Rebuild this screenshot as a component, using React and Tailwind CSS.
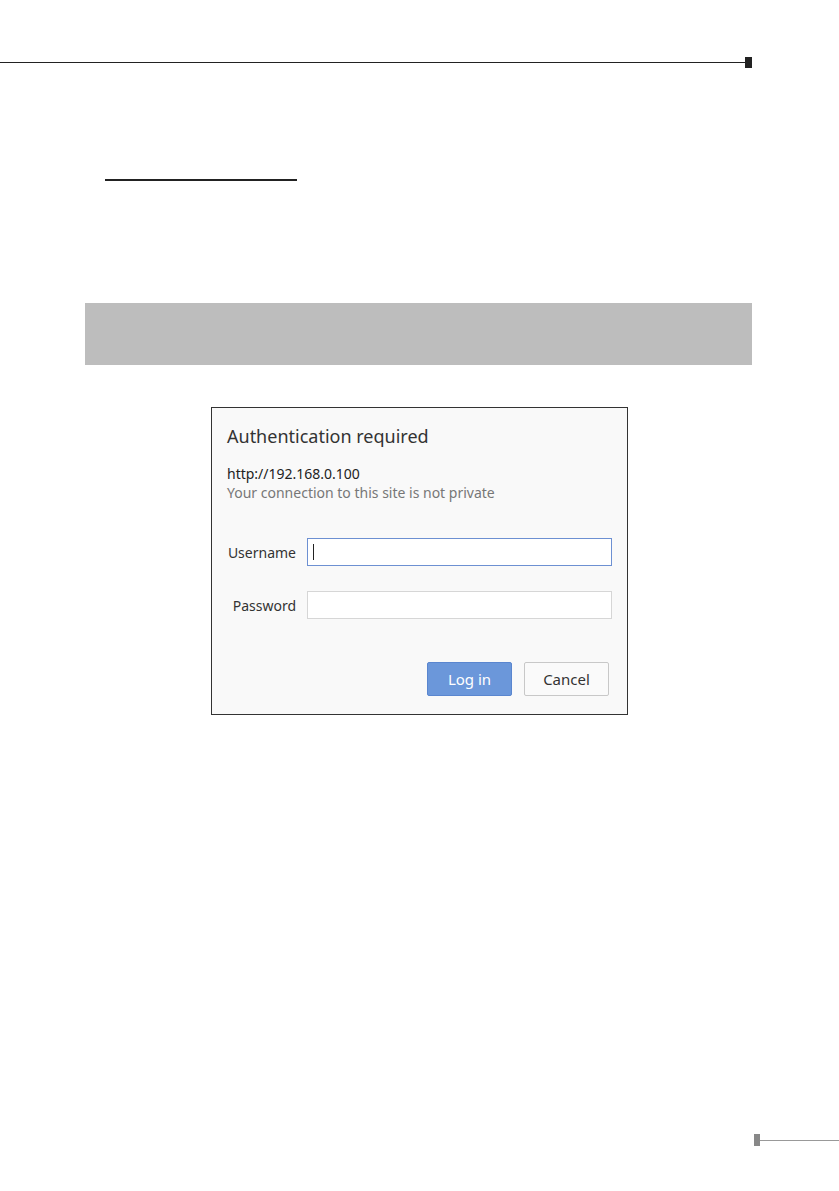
import React from 'react';

export default function App() {
  return (
    <div className="w-[839px] h-[1191px] bg-white flex flex-col font-['Noto_Sans',sans-serif]">
      {/* Page header rule */}
      <div className="mt-[57px] flex items-center h-[11px]">
        <div className="w-[745px] h-px bg-[#222]" />
        <div className="w-[7px] h-[11px] bg-[#222]" />
      </div>

      {/* Section underline */}
      <div className="mt-[111px] ml-[105px] w-[192px] h-[2px] bg-[#222]" />

      {/* Grey note bar */}
      <div className="mt-[122px] ml-[85px] w-[667px] h-[62px] bg-[#bdbdbd]" />

      {/* Auth dialog screenshot */}
      <div className="mt-[42px] ml-[211px] w-[417px] h-[308px] border border-[#333] bg-[#f9f9f9] flex flex-col pl-[15px] pr-[15px]">
        <div className="mt-[16px] text-[18px] leading-[24px] text-[#333]">Authentication required</div>
        <div className="mt-[17px] text-[14px] leading-[18px] text-[#222]">http://192.168.0.100</div>
        <div className="mt-px text-[14px] leading-[18px] text-[#777]">Your connection to this site is not private</div>

        <div className="mt-[36px] grid grid-cols-[69px_1fr] gap-x-[11px] gap-y-[25px] items-center">
          <label className="text-[14px] text-[#333] text-right">Username</label>
          <div className="h-[28px] border border-[#6d90d2] bg-white flex items-center pl-[5px]">
            <div className="w-px h-[16px] bg-[#222]" />
          </div>
          <label className="text-[14px] text-[#333] text-right">Password</label>
          <div className="h-[28px] border border-[#d6d6d6] bg-white" />
        </div>

        <div className="mt-[43px] mr-[3px] flex justify-end gap-[12px]">
          <button className="w-[85px] h-[34px] rounded-[2px] border border-[#5a86cf] bg-[#6b97da] text-white text-[15px]">Log in</button>
          <button className="w-[85px] h-[34px] rounded-[2px] border border-[#c8c8c8] bg-[#fafafa] text-[#333] text-[15px]">Cancel</button>
        </div>
      </div>

      {/* Footer page marker */}
      <div className="mt-auto mb-[45px] flex items-center justify-end h-[12px]">
        <div className="w-[6px] h-[12px] bg-[#888]" />
        <div className="w-[79px] h-px bg-[#999]" />
      </div>
    </div>
  );
}
